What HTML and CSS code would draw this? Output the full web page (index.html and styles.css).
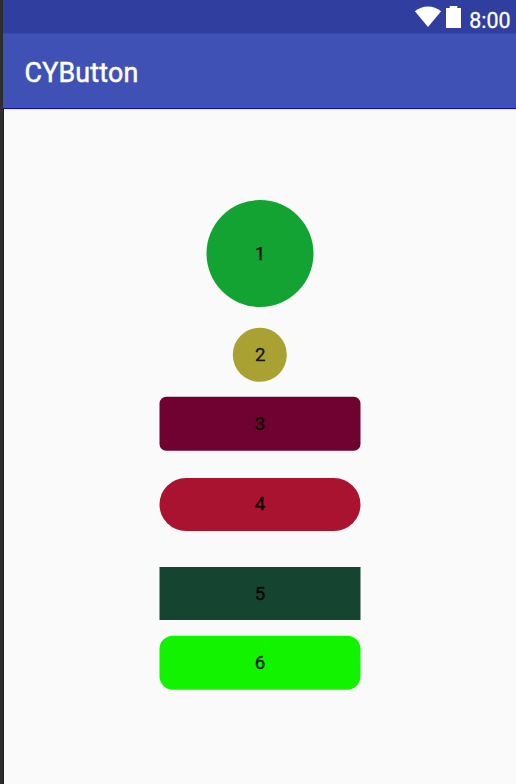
FILE: index.html
```html
<!DOCTYPE html>
<html lang="en">
<head>
<meta charset="utf-8">
<title>CYButton</title>
<link rel="stylesheet" href="styles.css">
</head>
<body>
<div class="screen">
  <div class="status-bar">
    <svg class="wifi" width="28" height="22" viewBox="0 0 28 22"><path d="M0.9 5.2C8.5-1.2 19.5-1.2 27.1 5.2L14 21Z" fill="#fff"/></svg>
    <svg class="battery" width="15" height="22" viewBox="0 0 15 22"><path d="M0 2H3.7V0H11.3V2H15V22H0Z" fill="#fff"/></svg>
    <span class="clock">8:00</span>
  </div>
  <header class="app-bar"><h1 class="title">CYButton</h1></header>
  <main class="content">
    <button class="btn circle-large">1</button>
    <button class="btn circle-small">2</button>
    <button class="btn rounded">3</button>
    <button class="btn pill">4</button>
    <button class="btn square">5</button>
    <button class="btn soft">6</button>
  </main>
</div>
</body>
</html>
```

FILE: styles.css
```css
* { box-sizing: border-box; }
body { margin: 0; font-family: Roboto, sans-serif; background: #2d2d2d; }
.screen { display: flex; flex-direction: column; height: 784px; padding-left: 3px; overflow: hidden; }
.status-bar {
  display: flex; justify-content: flex-end; align-items: flex-start;
  height: 33px; padding: 6px 5.5px 0 0; background: #303f9f; color: #fff;
}
.wifi { margin-right: 4px; }
.battery { margin-right: 8px; }
.clock { font-size: 21.4px; line-height: 30px; -webkit-text-stroke: .3px #fff; }
.app-bar { display: flex; align-items: center; height: 75px; padding: 3px 0 0 21.5px; background: #3f51b5; border-top: 1px solid #3a4aac; }
.title { margin: 0; color: #fff; font-size: 26.8px; font-weight: 400; line-height: 32px; letter-spacing: .2px; -webkit-text-stroke: .5px #fff; }
.content {
  display: flex; flex: 1; flex-direction: column; align-items: center;
  padding-top: 91px; background: #fafafa;
  border-top: 1px solid #00f; border-left: 1px solid #00f;
}
.btn {
  flex: none; width: 201px; height: 53.5px; padding: 0 0 0 1px; border: 0;
  color: rgba(0, 0, 0, .87); font: 400 18.7px/22px Roboto, sans-serif;
  -webkit-text-stroke: .4px rgba(0, 0, 0, .87);
  transform: translateX(-.5px);
}
.circle-large { width: 107px; height: 107px; border-radius: 50%; background: #12a332; }
.circle-small { width: 53.5px; margin-top: 21.2px; border-radius: 50%; background: #a9a232; transform: translate(-.2px, -.2px); }
.rounded { margin-top: 15.7px; border-radius: 6.7px; background: #700231; transform: translate(-.5px, -.3px); }
.pill { margin-top: 26.8px; border-radius: 27px; background: #a91330; }
.square { margin-top: 35.6px; background: #154431; }
.soft { margin-top: 16px; border-radius: 13.4px; background: #12f300; transform: translate(-.5px, -.3px); }
```
